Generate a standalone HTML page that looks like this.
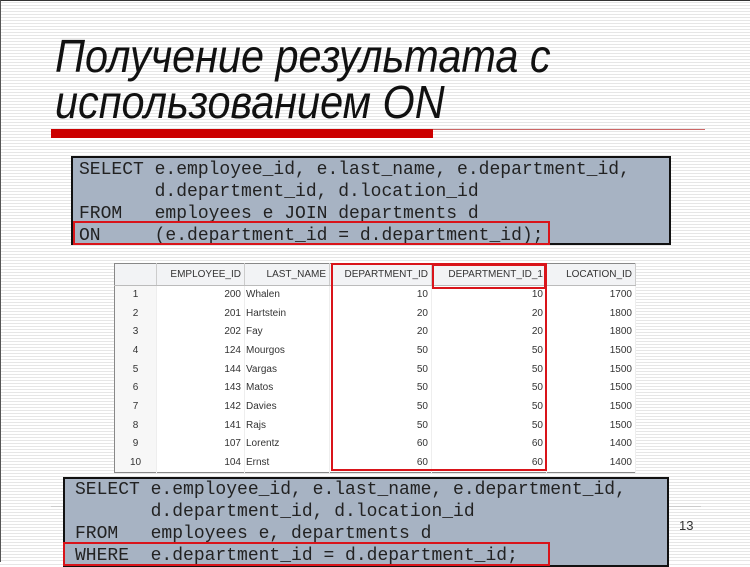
<!DOCTYPE html><html><head><meta charset="utf-8"><style>
*{margin:0;padding:0;box-sizing:border-box}
body{width:750px;height:562px;overflow:hidden;position:relative;background:#fff repeating-linear-gradient(to bottom,#fff 0,#fff 2px,#e6e6e6 2px,#e6e6e6 3px);border-top:1px solid #333;border-left:1px solid #555;font-family:"Liberation Sans",sans-serif}
.t{position:absolute;left:54px;font-style:italic;font-size:46px;color:#111;line-height:1;transform:scaleX(0.9);transform-origin:left top;white-space:nowrap}
.code{position:absolute;background:#a7b3c3;border:2px solid #111;font-family:"Liberation Mono",monospace;font-size:18px;color:#222;white-space:pre;line-height:22px;padding-left:6px}
.rb{position:absolute;border:2px solid #d9141a}
table{position:absolute;left:113px;top:262px;width:522px;border-collapse:collapse;table-layout:fixed;background:#fff;font-size:10px;color:#333;border:1px solid #888}
td,th{padding:0 3px;text-align:right;border-right:1px solid #eee;line-height:12px;overflow:hidden;white-space:nowrap}
td{height:18.7px}
th{font-weight:normal;background:#f2f3f5;height:22px;border-bottom:1px solid #bbb;border-right:1px solid #ccc}
td.l{text-align:left;padding-left:1px}
td.i{text-align:center;background:#f7f7f7}
</style></head><body>
<div class="t" style="top:32px">Получение результата с</div>
<div class="t" style="top:78px">использованием ON</div>
<div style="position:absolute;left:50px;top:128px;width:382px;height:9px;background:#cc0000"></div>
<div style="position:absolute;left:432px;top:128px;width:272px;height:1px;background:#c66"></div>
<div class="code" style="left:70px;top:155px;width:600px;height:89px;padding-top:1px">SELECT e.employee_id, e.last_name, e.department_id,
       d.department_id, d.location_id
FROM   employees e JOIN departments d
ON     (e.department_id = d.department_id);</div>
<div class="rb" style="left:72px;top:220px;width:477px;height:24px"></div>
<table>
<tr><th style="width:42px"></th><th style="width:88px">EMPLOYEE_ID</th><th style="width:85px">LAST_NAME</th><th style="width:102px">DEPARTMENT_ID</th><th style="width:115px">DEPARTMENT_ID_1</th><th>LOCATION_ID</th></tr>
<tr><td class="i">1</td><td>200</td><td class="l">Whalen</td><td>10</td><td>10</td><td>1700</td></tr>
<tr><td class="i">2</td><td>201</td><td class="l">Hartstein</td><td>20</td><td>20</td><td>1800</td></tr>
<tr><td class="i">3</td><td>202</td><td class="l">Fay</td><td>20</td><td>20</td><td>1800</td></tr>
<tr><td class="i">4</td><td>124</td><td class="l">Mourgos</td><td>50</td><td>50</td><td>1500</td></tr>
<tr><td class="i">5</td><td>144</td><td class="l">Vargas</td><td>50</td><td>50</td><td>1500</td></tr>
<tr><td class="i">6</td><td>143</td><td class="l">Matos</td><td>50</td><td>50</td><td>1500</td></tr>
<tr><td class="i">7</td><td>142</td><td class="l">Davies</td><td>50</td><td>50</td><td>1500</td></tr>
<tr><td class="i">8</td><td>141</td><td class="l">Rajs</td><td>50</td><td>50</td><td>1500</td></tr>
<tr><td class="i">9</td><td>107</td><td class="l">Lorentz</td><td>60</td><td>60</td><td>1400</td></tr>
<tr><td class="i">10</td><td>104</td><td class="l">Ernst</td><td>60</td><td>60</td><td>1400</td></tr>
</table>
<div class="rb" style="left:330px;top:262px;width:216px;height:208px"></div>
<div class="rb" style="left:431px;top:263px;width:114px;height:25px"></div>
<div style="position:absolute;left:50px;top:505px;width:650px;height:1px;background:#ccc"></div>
<div class="code" style="left:62px;top:476px;width:606px;height:90px;padding-top:0;padding-left:10px">SELECT e.employee_id, e.last_name, e.department_id,
       d.department_id, d.location_id
FROM   employees e, departments d
WHERE  e.department_id = d.department_id;</div>
<div class="rb" style="left:62px;top:541px;width:487px;height:24px"></div>
<div style="position:absolute;left:678px;top:517px;font-size:13px;color:#333">13</div>
</body></html>
